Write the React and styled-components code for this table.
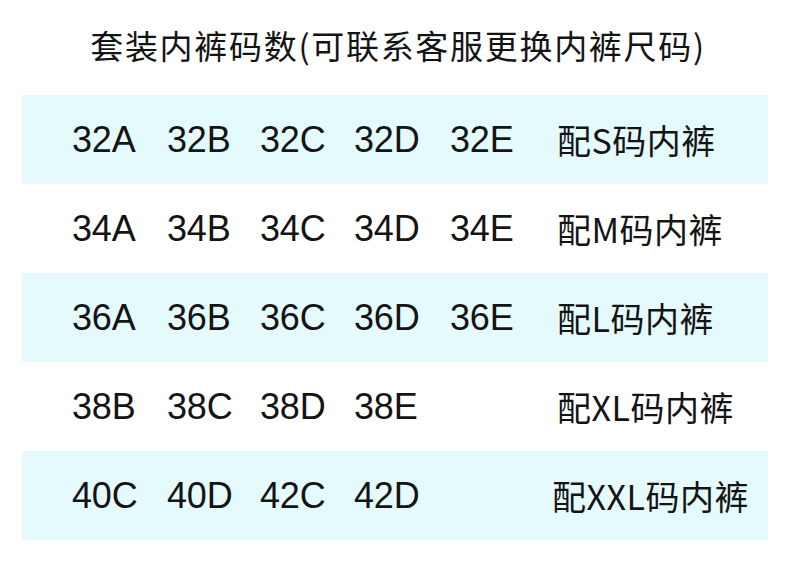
import React from 'react';
import styled, { createGlobalStyle } from 'styled-components';

const GlobalStyle = createGlobalStyle`
  html, body {
    margin: 0;
    padding: 0;
    background: #ffffff;
  }
`;

const rows = [
  { sizes: ['32A', '32B', '32C', '32D', '32E'], label: '配S码内裤' },
  { sizes: ['34A', '34B', '34C', '34D', '34E'], label: '配M码内裤' },
  { sizes: ['36A', '36B', '36C', '36D', '36E'], label: '配L码内裤' },
  { sizes: ['38B', '38C', '38D', '38E', ''], label: '配XL码内裤' },
  { sizes: ['40C', '40D', '42C', '42D', ''], label: '配XXL码内裤', nudge: -5 },
];

const Page = styled.div`
  width: 790px;
  height: 577px;
  background: #ffffff;
  color: #141414;
  overflow: hidden;
`;

const Title = styled.h1`
  margin: 0;
  height: 95px;
  display: flex;
  align-items: center;
  justify-content: center;
  box-sizing: border-box;
  padding: 0 0 4px 6px;
  font-family: 'Noto Sans CJK SC', 'Liberation Sans', sans-serif;
  font-size: 33px;
  font-weight: 400;
  line-height: 1;
  letter-spacing: 1.7px;
`;

const Table = styled.div`
  margin-left: 22px;
  width: 746px;
  display: flex;
  flex-direction: column;
`;

const Row = styled.div`
  height: 89px;
  display: grid;
  grid-template-columns: 95px 93px 94px 96px 107px 1fr;
  align-items: center;
  padding-left: 50px;
  box-sizing: border-box;
  background: ${(props) => (props.shaded ? '#e4fafd' : '#ffffff')};
`;

const Size = styled.span`
  font-family: 'Liberation Sans', Arial, sans-serif;
  font-size: 36px;
  line-height: 1;
  letter-spacing: -0.2px;
`;

const Label = styled.span`
  font-family: 'Noto Sans CJK SC', 'Liberation Sans', sans-serif;
  font-size: 34px;
  line-height: 1;
  letter-spacing: 0.5px;
  margin-left: ${(props) => props.nudge || 0}px;
  white-space: nowrap;
`;

const App = () => {
  return (
    <Page>
      <GlobalStyle />
      <Title>套装内裤码数(可联系客服更换内裤尺码)</Title>
      <Table>
        {rows.map((row, i) => (
          <Row key={row.label} shaded={i % 2 === 0}>
            {row.sizes.map((s, j) => (
              <Size key={j}>{s}</Size>
            ))}
            <Label nudge={row.nudge}>{row.label}</Label>
          </Row>
        ))}
      </Table>
    </Page>
  );
};

export default App;
